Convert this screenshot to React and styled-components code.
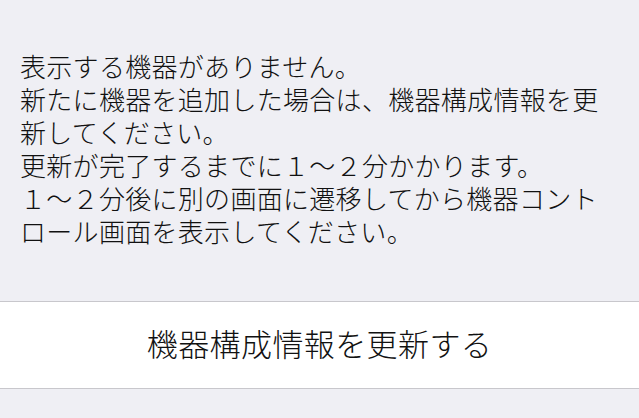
import React from "react";
import styled, { createGlobalStyle } from "styled-components";

const GlobalStyle = createGlobalStyle`
  html, body {
    margin: 0;
    padding: 0;
    background: #efeff4;
  }
  body {
    font-family: "Noto Sans CJK JP", "Noto Sans", sans-serif;
    color: #111;
  }
`;

const Page = styled.div`
  min-height: 418px;
  display: flex;
  flex-direction: column;
  background: #efeff4;
`;

const Message = styled.div`
  padding: 49px 20px 0;
  height: 301px;
  box-sizing: border-box;
`;

const Line = styled.p`
  margin: 0;
  font-size: 26px;
  font-weight: 300;
  line-height: 33px;
  letter-spacing: 0.3px;
  color: #111;
`;

const Group = styled.div`
  border-top: 1px solid #c8c7cc;
  border-bottom: 1px solid #c8c7cc;
  background: #fff;
`;

const Button = styled.button`
  display: block;
  width: 100%;
  height: 86px;
  border: 0;
  background: transparent;
  font-family: inherit;
  font-size: 31px;
  font-weight: 300;
  letter-spacing: 0.4px;
  color: #111;
  padding: 0 0 6px;
  cursor: pointer;
`;

const lines = [
  "表示する機器がありません。",
  "新たに機器を追加した場合は、機器構成情報を更新してください。",
  "更新が完了するまでに１～２分かかります。",
  "１～２分後に別の画面に遷移してから機器コントロール画面を表示してください。",
];

const App = () => (
  <Page>
    <GlobalStyle />
    <Message>
      {lines.map((text) => (
        <Line key={text}>{text}</Line>
      ))}
    </Message>
    <Group>
      <Button>機器構成情報を更新する</Button>
    </Group>
  </Page>
);

export default App;
